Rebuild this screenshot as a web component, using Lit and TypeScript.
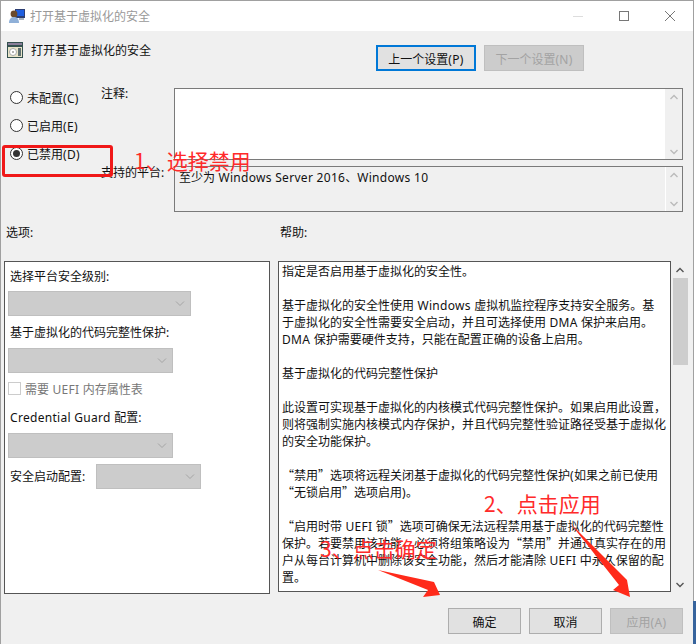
import { LitElement, html, css, svg } from "lit";
import { customElement } from "lit/decorators.js";

const chevUp = svg`<path d="M1.5 6 L5 2.5 L8.5 6" fill="none" stroke="currentColor" stroke-width="1.4"/>`;
const chevDown = svg`<path d="M1.5 3 L5 6.5 L8.5 3" fill="none" stroke="currentColor" stroke-width="1.4"/>`;

/** Wraps runs of ASCII in a span, since the Latin letters use another face and tracking than the CJK ones. */
function t(s: string) {
  return s.split(/( ?[\x21-\x7e]+(?: [\x21-\x7e]+)* ?)/).map((part, i) =>
    i % 2 ? html`<span class="lat">${part}</span>` : part
  );
}

const HELP = [
  "指定是否启用基于虚拟化的安全性。",
  "",
  "基于虚拟化的安全性使用 Windows 虚拟机监控程序支持安全服务。基",
  "于虚拟化的安全性需要安全启动，并且可选择使用 DMA 保护来启用。",
  "DMA 保护需要硬件支持，只能在配置正确的设备上启用。",
  "",
  "基于虚拟化的代码完整性保护",
  "",
  "此设置可实现基于虚拟化的内核模式代码完整性保护。如果启用此设置，",
  "则将强制实施内核模式内存保护，并且代码完整性验证路径受基于虚拟化",
  "的安全功能保护。",
  "",
  "“禁用”选项将远程关闭基于虚拟化的代码完整性保护(如果之前已使用",
  "“无锁启用”选项启用)。",
  "",
  "“启用时带 UEFI 锁”选项可确保无法远程禁用基于虚拟化的代码完整性",
  "保护。若要禁用该功能，必须将组策略设为“禁用”并通过真实存在的用",
  "户从每台计算机中删除该安全功能，然后才能清除 UEFI 中永久保留的配",
  "置。",
];

@customElement("app-root")
export class AppRoot extends LitElement {
  static styles = css`
    :host {
      display: block;
      position: relative;
      width: 696px;
      height: 644px;
      overflow: hidden;
      background: #fff;
      font-family: "Noto Sans CJK SC", "Noto Sans", sans-serif;
      font-size: 12px;
      line-height: 17px;
      color: #111;
    }
    .lat { font-family: "Noto Sans", sans-serif; letter-spacing: 0.3px; line-height: 0; white-space: pre; }
    .window {
      width: 694px;
      height: 644px;
      box-sizing: border-box;
      border: 1px solid #a0a0a0;
      border-bottom: 0;
      background: #f0f0f0;
      display: flex;
      flex-direction: column;
    }
    .title {
      height: 30px;
      box-sizing: border-box;
      padding-bottom: 1px;
      background: #fff;
      display: flex;
      align-items: center;
      padding-left: 8px;
      color: #999;
      flex: none;
    }
    .title svg.app { margin-right: 4px; }
    .title .grow { flex: 1; }
    .win-btn { width: 46px; height: 29px; display: flex; align-items: center; justify-content: center; }
    .content { flex: 1; padding: 14px 10px 0 3px; display: flex; flex-direction: column; }
    .head { display: flex; align-items: flex-start; height: 43px; }
    .head-title { display: flex; align-items: center; gap: 8px; padding-left: 3px; width: 369px; margin-top: -4px; }
    .btn {
      box-sizing: border-box;
      width: 100px;
      height: 26px;
      border: 1px solid #adadad;
      background: #e1e1e1;
      display: flex;
      align-items: center;
      justify-content: center;
    }
    .btn.focus { border: 2px solid #0078d7; }
    .btn.off { background: #ccc; border-color: #bfbfbf; color: #a3a3a3; }
    .head .btn + .btn { margin-left: 8px; }
    .top { display: grid; grid-template-columns: 97px 73px 1fr; height: 124px; }
    .radios { display: flex; flex-direction: column; gap: 11px; padding-top: 1px; padding-left: 6px; }
    .radio { display: flex; align-items: center; gap: 4px; }
    .dot { width: 13px; height: 13px; box-sizing: border-box; border: 1px solid #333; border-radius: 50%; background: #fff; display: flex; align-items: center; justify-content: center; }
    .dot i { width: 7px; height: 7px; border-radius: 50%; background: #333; }
    .labels { display: flex; flex-direction: column; gap: 62px; white-space: nowrap; }
    .labels span:first-child { margin-top: -4px; }
    .boxes { display: flex; flex-direction: column; gap: 6px; }
    .box { border: 1px solid #7a7a7a; box-sizing: border-box; display: flex; justify-content: space-between; }
    .note { height: 72px; background: #fff; }
    .plat { height: 46px; background: #f0f0f0; }
    .plat .text { padding: 1px 0 0 4px; }
    .bar { width: 17px; background: #f0f0f0; display: flex; flex-direction: column; justify-content: space-between; align-items: center; color: #bbb; padding: 4px 0; box-sizing: border-box; flex: none; }
    .bar svg { display: block; }
    .plat .bar { border-left: 1px solid #fff; }
    .sections { display: grid; grid-template-columns: 274px 1fr; height: 49px; padding: 11px 0 0 2px; box-sizing: border-box; }
    .panels { display: flex; height: 333px; }
    .options { width: 266px; box-sizing: border-box; border: 1px solid #555; background: #fff; padding: 0 3px; margin-right: 8px; flex: none; display: flex; flex-direction: column; }
    .help { width: 393px; height: 331px; box-sizing: border-box; border: 1px solid #555; background: #fff; padding: 0 3px; overflow: hidden; flex: none; }
    .help div { height: 17px; white-space: nowrap; }
    .opt-label { padding: 0 2px; }
    .select { box-sizing: border-box; height: 25px; background: #ccc; border: 1px solid #bfbfbf; display: flex; align-items: center; justify-content: flex-end; padding-right: 5px; color: #a5a5a5; flex: none; }
    .w183 { width: 183px; }
    .w165 { width: 165px; }
    .w105 { width: 105px; }
    .check { display: flex; align-items: center; gap: 4px; color: #777; }
    .check i { width: 13px; height: 13px; box-sizing: border-box; border: 1px solid #ccc; background: #fff; display: block; }
    .inline { display: flex; align-items: center; gap: 8px; }
    .inline .opt-label { padding-bottom: 2px; }
    .mt5 { margin-top: 5px; }
    .mt6 { margin-top: 6px; }
    .mt7 { margin-top: 7px; }
    .mt8 { margin-top: 8px; }
    .mt11 { margin-top: 11px; }
    .vbar { width: 18px; height: 331px; background: #f0f0f0; display: flex; flex-direction: column; align-items: center; color: #555; flex: none; }
    .vbar .up { height: 17px; display: flex; align-items: center; }
    .vbar .thumb { width: 15px; height: 87px; background: #cdcdcd; }
    .vbar .down { margin-top: auto; height: 17px; display: flex; align-items: center; }
    .footer { display: flex; justify-content: flex-end; gap: 8px; padding: 14px 0 0 0; }
    .footer .btn { width: 73px; }
    .red { position: absolute; color: #ff2a2a; font-size: 21px; line-height: 24px; white-space: nowrap; }
    .red.one { left: 134px; top: 148px; }
    .red.two { left: 484px; top: 491px; }
    .red.three { left: 320px; top: 536px; }
    .redbox { position: absolute; left: 2px; top: 145px; width: 111px; height: 32px; box-sizing: border-box; border: 3px solid #f01818; border-radius: 3px; }
    .overlay { position: absolute; left: 0; top: 0; }
  `;

  private chev() {
    return html`<svg width="10" height="8" viewBox="0 0 10 8"><path d="M1 1.5 L5 5.5 L9 1.5" fill="none" stroke="currentColor" stroke-width="1"/></svg>`;
  }
  private bar() {
    return html`<div class="bar">
      <svg width="10" height="8" viewBox="0 0 10 8">${chevUp}</svg>
      <svg width="10" height="8" viewBox="0 0 10 8">${chevDown}</svg>
    </div>`;
  }

  render() {
    return html`
      <div class="window">
        <div class="title">
          <svg class="app" width="17" height="16" viewBox="0 0 17 16">
            <rect x="6" y="1" width="10" height="9" fill="#2d3f73"/>
            <rect x="7" y="2" width="8" height="6" fill="#1f5fe0"/>
            <rect x="10" y="10" width="5" height="2" fill="#a9b4c0"/>
            <circle cx="5" cy="6" r="3.4" fill="#6a4a2c"/>
            <path d="M0 15 C0 10 3 9 5 9 C8 9 10 11 10 15 Z" fill="#8fb0d8"/>
          </svg>
          <span>打开基于虚拟化的安全</span>
          <span class="grow"></span>
          <div class="win-btn"><svg width="10" height="10" viewBox="0 0 10 10"><path d="M0 5.5H10" stroke="#ddd"/></svg></div>
          <div class="win-btn"><svg width="10" height="10" viewBox="0 0 10 10"><rect x=".5" y=".5" width="9" height="9" fill="none" stroke="#777"/></svg></div>
          <div class="win-btn"><svg width="10" height="10" viewBox="0 0 10 10"><path d="M0 0L10 10M10 0L0 10" stroke="#777"/></svg></div>
        </div>
        <div class="content">
          <div class="head">
            <div class="head-title">
              <svg width="16" height="16" viewBox="0 0 16 16">
                <rect width="16" height="16" fill="#34514f"/>
                <rect x="1" y="1" width="14" height="2" fill="#8a7f9a"/>
                <rect x="1" y="5" width="14" height="10" fill="#e8e4c8"/>
                <circle cx="6" cy="10" r="3.5" fill="#fff" stroke="#aaa"/>
                <circle cx="6" cy="10" r="1" fill="#999"/>
                <rect x="11" y="6" width="3" height="8" fill="#5f7070"/>
              </svg>
              <span>打开基于虚拟化的安全</span>
            </div>
            <div class="btn focus"><span>${t("上一个设置(P)")}</span></div>
            <div class="btn off"><span>${t("下一个设置(N)")}</span></div>
          </div>
          <div class="top">
            <div class="radios">
              <div class="radio"><span class="dot"></span><span>${t("未配置(C)")}</span></div>
              <div class="radio"><span class="dot"></span><span>${t("已启用(E)")}</span></div>
              <div class="radio"><span class="dot"><i></i></span><span>${t("已禁用(D)")}</span></div>
            </div>
            <div class="labels"><span>${t("注释:")}</span><span>${t("支持的平台:")}</span></div>
            <div class="boxes">
              <div class="box note"><span></span>${this.bar()}</div>
              <div class="box plat"><span class="text">${t("至少为 Windows Server 2016、Windows 10")}</span>${this.bar()}</div>
            </div>
          </div>
          <div class="sections"><span>${t("选项:")}</span><span>${t("帮助:")}</span></div>
          <div class="panels">
            <div class="options">
              <div class="opt-label mt5">${t("选择平台安全级别:")}</div>
              <div class="select w183 mt7">${this.chev()}</div>
              <div class="opt-label mt7">${t("基于虚拟化的代码完整性保护:")}</div>
              <div class="select w165 mt8">${this.chev()}</div>
              <div class="check mt7"><i></i><span>${t("需要 UEFI 内存属性表")}</span></div>
              <div class="opt-label mt11">${t("Credential Guard 配置:")}</div>
              <div class="select w165 mt8">${this.chev()}</div>
              <div class="inline mt6"><span class="opt-label">${t("安全启动配置:")}</span><div class="select w105">${this.chev()}</div></div>
            </div>
            <div class="help">${HELP.map((line) => html`<div>${t(line)}</div>`)}</div>
            <div class="vbar">
              <div class="up"><svg width="10" height="8" viewBox="0 0 10 8">${chevUp}</svg></div>
              <div class="thumb"></div>
              <div class="down"><svg width="10" height="8" viewBox="0 0 10 8">${chevDown}</svg></div>
            </div>
          </div>
          <div class="footer">
            <div class="btn">确定</div>
            <div class="btn">取消</div>
            <div class="btn off"><span>${t("应用(A)")}</span></div>
          </div>
        </div>
      </div>
      <div class="redbox"></div>
      <div class="red one">1、选择禁用</div>
      <div class="red two">2、点击应用</div>
      <div class="red three">3、点击确定</div>
      <svg class="overlay" width="696" height="644" viewBox="0 0 696 644">
        <path d="M378 570 L434 582 L440 595 L423 597 L428 590 Z" fill="#ff2a1a"/>
        <path d="M570 523 L627 580 L630 597 L613 590 L619 585 Z" fill="#ff2a1a"/>
        <rect x="693" y="601" width="3" height="43" fill="#36639c"/>
      </svg>
    `;
  }
}
